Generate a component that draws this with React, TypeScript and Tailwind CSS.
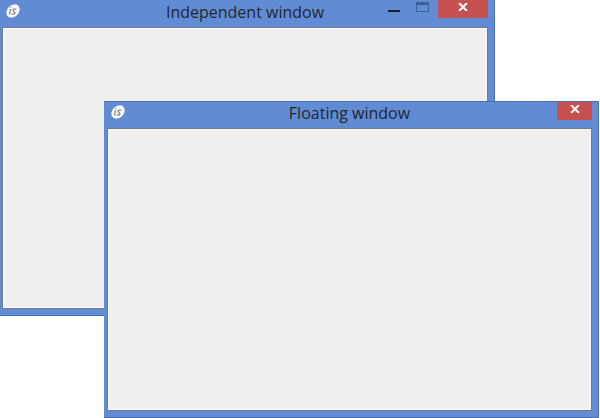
import React from 'react';

type WindowProps = {
  title: string;
  className: string;
  controls: React.ReactNode;
};

const AppLogo = () => (
  <svg width="14" height="14" viewBox="0 0 14 14" aria-hidden="true">
    <ellipse cx="7" cy="7" rx="7.4" ry="5.8" transform="rotate(-45 7 7)" fill="#fbfcfe" />
    <g fill="none" stroke="#74777c" strokeWidth="1.2" strokeLinecap="round">
      <path d="M4.4 5.6 3.6 10" />
      <path d="M4.9 3.2v.1" />
      <path d="M9.9 5.2C8.5 4.7 7 5.1 7 6.3 7 7.6 9.3 7.5 9 8.9 8.8 10.3 7.1 10.3 5.9 9.8" />
    </g>
  </svg>
);

const CloseIcon = () => (
  <svg width="10" height="8" viewBox="0 0 10 8" aria-hidden="true">
    <path d="M1 0 9 8M9 0 1 8" stroke="#fff" strokeWidth="2" />
  </svg>
);

const Window = ({ title, className, controls }: WindowProps) => (
  <section className={`absolute flex flex-col bg-[#618bd3] border-r border-b border-[#4a70b0] ${className}`}>
    <header className="relative h-[26px] shrink-0">
      <div className="absolute left-1 top-[3px]">
        <AppLogo />
      </div>
      <h2 className="text-center text-base leading-[22px] text-[#23272e]">{title}</h2>
      <div className="absolute right-0 top-0 flex items-start">{controls}</div>
    </header>
    <div className="flex-1 border border-[#737b87] bg-[#efefef] shadow-[inset_0_0_0_1px_#f8f8f6]" />
  </section>
);

const App = () => {
  return (
    <main className="relative min-h-screen overflow-hidden bg-white font-['Open_Sans','Noto_Sans',sans-serif]">
      <Window
        title="Independent window"
        className="left-0 right-[105px] top-0 h-[316px] pb-1.5 pl-0.5 pr-1.5 pt-px"
        controls={
          <>
            <button type="button" aria-label="Minimize" className="flex h-[18px] w-7 justify-center pt-[9px]">
              <span className="h-0.5 w-3 bg-[#1b1f26]" />
            </button>
            <button type="button" aria-label="Maximize" className="flex h-[18px] w-7 justify-center pt-px">
              <span className="h-[10px] w-[13px] border border-t-[3px] border-[#3f5f94]" />
            </button>
            <button type="button" aria-label="Close" className="-mt-px ml-0.5 flex h-[18px] w-[50px] items-center justify-center bg-[#c75050] pb-1">
              <CloseIcon />
            </button>
          </>
        }
      />
      <Window
        title="Floating window"
        className="bottom-0 left-[104px] right-px top-[101px] border-t pb-1.5 pl-[3px] pr-1.5"
        controls={
          <button type="button" aria-label="Close" className="flex h-[18px] w-[35px] items-center justify-center bg-[#c75050] pb-1">
            <CloseIcon />
          </button>
        }
      />
    </main>
  );
};

export default App;
